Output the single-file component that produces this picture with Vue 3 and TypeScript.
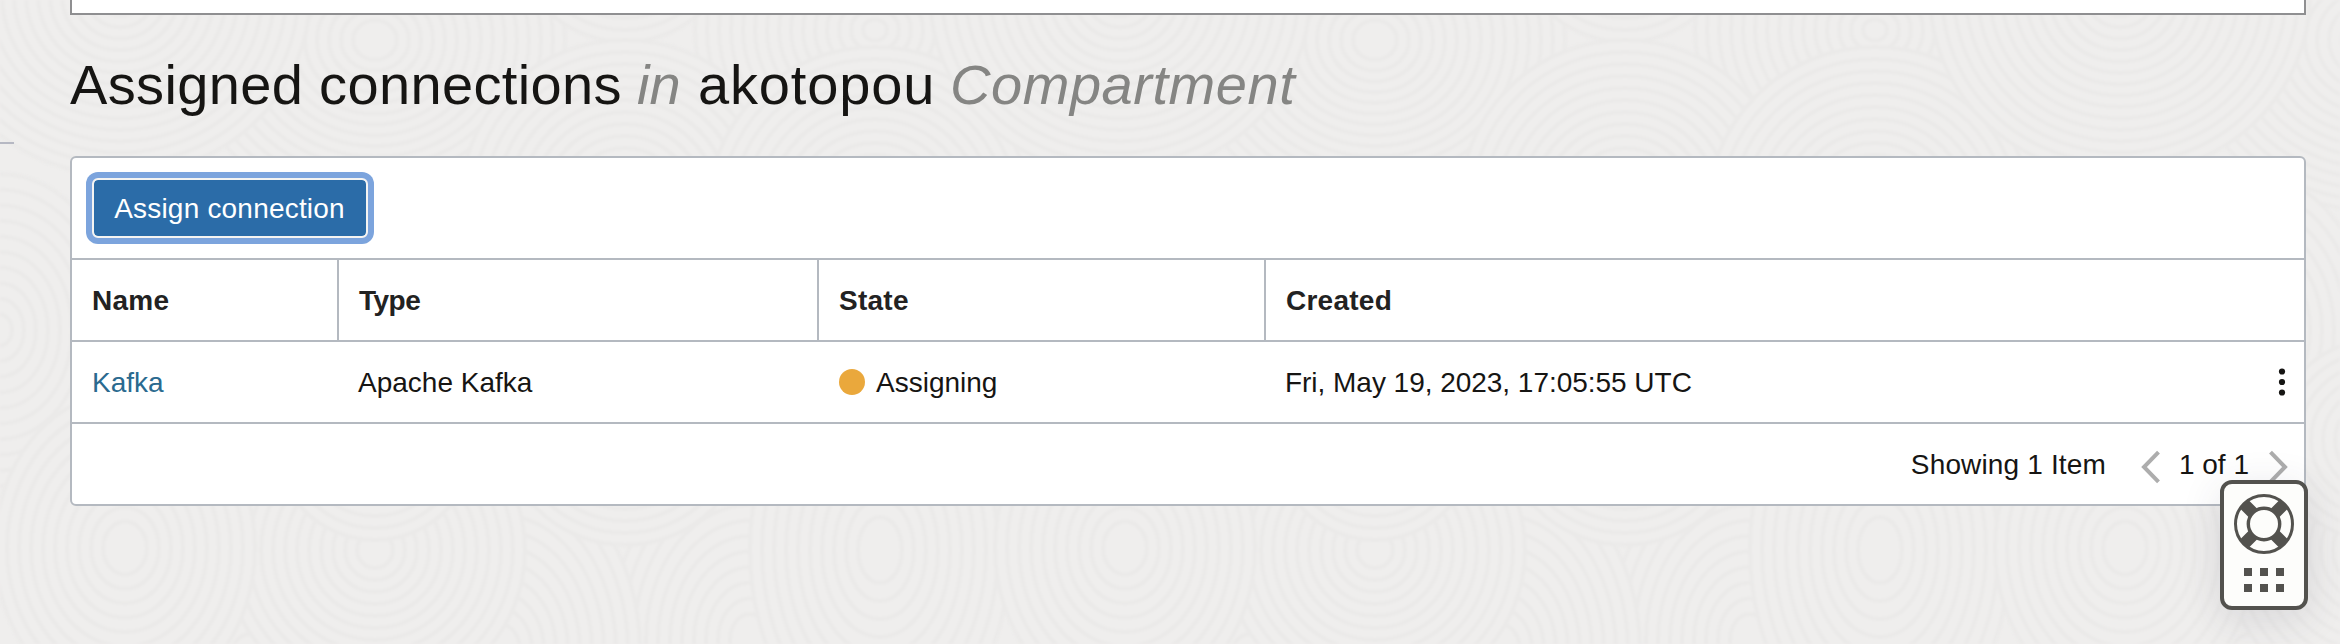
<script setup lang="ts">
interface Ring { cx: number; cy: number; radii: number[]; ratio: number }

// One texture tile: overlapping sets of concentric ripples, repeated every 1000px.
const TILE = 1000
const STEP = 12
const seeds: [number, number, number, number][] = [
  [375, 40, 190, 0.9], [875, 30, 180, 0.9], [625, -70, 112, 1],
  [120, -5, 190, 0.95], [625, 205, 165, 1], [875, 215, 168, 1],
  [0, 330, 120, 1.3], [250, 330, 120, 1.3],
  [750, 640, 140, 1.3], [500, 650, 140, 1.3], [250, 660, 140, 1.3],
  [880, 550, 130, 1.5], [375, 550, 150, 1], [125, 548, 130, 1.2], [625, 420, 125, 1], [375, 440, 100, 1],
]
const ripples: Ring[] = [0, 1, 2].flatMap((tile) =>
  seeds.map(([cx, cy, r, ratio]) => ({
    cx: cx + tile * TILE, cy, ratio,
    radii: Array.from({ length: Math.floor(r / STEP) }, (_, i) => r - i * STEP),
  })),
)

const columns = [
  { id: 'name', label: 'Name' },
  { id: 'type', label: 'Type' },
  { id: 'state', label: 'State' },
  { id: 'created', label: 'Created' },
]
const rows = [
  { name: 'Kafka', type: 'Apache Kafka', state: 'Assigning', created: 'Fri, May 19, 2023, 17:05:55 UTC' },
]
</script>

<template>
  <div class="page">
    <svg class="texture" width="2340" height="644" viewBox="0 0 2340 644" aria-hidden="true">
      <g v-for="(g, i) in ripples" :key="i">
        <ellipse
          v-for="(r, j) in g.radii" :key="j" :cx="g.cx" :cy="g.cy" :rx="r" :ry="r * g.ratio"
          fill="#efeeed" stroke="#ebeae9" stroke-width="4"
        />
      </g>
    </svg>
    <div class="side-rule"></div>
    <main class="content">
      <div class="upper-box"></div>
      <h1 class="title">
        <span class="t-main">Assigned connections</span>
        <em class="t-in">in</em>
        <span class="t-name">akotopou</span>
        <em class="t-kind">Compartment</em>
      </h1>
      <section class="panel">
        <div class="toolbar"><button class="assign" type="button">Assign connection</button></div>
        <div class="grid head">
          <div v-for="c in columns" :key="c.id" class="cell" :class="'h-' + c.id">{{ c.label }}</div>
        </div>
        <div v-for="r in rows" :key="r.name" class="grid row">
          <div class="cell"><a class="link">{{ r.name }}</a></div>
          <div class="cell type">{{ r.type }}</div>
          <div class="cell state"><i class="dot"></i><span>{{ r.state }}</span></div>
          <div class="cell created">
            <span>{{ r.created }}</span>
            <svg class="menu" width="8" height="30" viewBox="0 0 8 30" fill="#161513">
              <circle cx="4" cy="4.5" r="3.1" /><circle cx="4" cy="15" r="3.1" /><circle cx="4" cy="25.5" r="3.1" />
            </svg>
          </div>
        </div>
        <div class="footer">
          <span class="showing">Showing 1 Item</span>
          <svg class="chev prev" width="20" height="34" viewBox="0 0 20 34"><path d="M17.5 2.2 3 17l14.5 14.8" /></svg>
          <span class="pages">1 of 1</span>
          <svg class="chev next" width="20" height="34" viewBox="0 0 20 34"><path d="M2.5 2.2 17 17 2.5 31.8" /></svg>
        </div>
      </section>
    </main>
    <aside class="help">
      <svg width="60" height="60" viewBox="0 0 60 60" fill="none" stroke="#53524e">
        <path stroke-width="12" d="M9.5 9.5 19 19M41 41l9.5 9.5M50.5 9.5 41 19M19 41l-9.5 9.5" />
        <circle cx="30" cy="30" r="28.5" stroke-width="3" />
        <circle cx="30" cy="30" r="15.7" stroke-width="3.4" />
      </svg>
      <div class="squares"><i v-for="n in 6" :key="n"></i></div>
    </aside>
  </div>
</template>

<style>
body { margin: 0; background: #efeeed; }
</style>

<style scoped>
.page {
  position: relative; width: 2340px; height: 644px; overflow: hidden; background: #efeeed;
  font-family: "Liberation Sans", Arial, sans-serif; font-size: 28px; color: #161513;
}
.texture { position: absolute; left: 0; top: 0; filter: blur(1.2px); }
.side-rule { position: absolute; left: 0; top: 142px; width: 14px; height: 2px; background: #b6b8c3; }
.content { position: relative; width: 2236px; margin-left: 70px; }
.upper-box { box-sizing: border-box; height: 15px; background: #fff; border: 2px solid #8f8f91; border-top: 0; }
.title { display: flex; margin: 0; height: 141px; font-size: 56px; font-weight: 400; line-height: 139px; white-space: nowrap; }
.title em { color: #858583; }
.t-main { width: 567px; letter-spacing: 0.35px; }
.t-in { width: 61px; }
.t-name { width: 252px; letter-spacing: 0.85px; }
.t-kind { letter-spacing: 0.55px; }
.panel { box-sizing: border-box; height: 350px; background: #fff; border: 2px solid #b4b9c0; border-radius: 6px; }
.toolbar { box-sizing: border-box; height: 100px; padding: 20px; }
.assign {
  display: block; box-sizing: border-box; width: 276px; height: 60px; padding: 1px 1px 0 0; border: 2px solid #f5f4f2;
  border-radius: 6px; background: #2b6ca8; background-clip: padding-box; box-shadow: 0 0 0 6px #7ca4dd;
  color: #fff; font: 28px/55px "Liberation Sans", Arial, sans-serif; letter-spacing: 0.2px;
}
.grid {
  display: grid; grid-template-columns: 265px 480px 447px 1fr; grid-template-rows: 80px;
  border-top: 2px solid #b4b9c0; line-height: 79px; white-space: nowrap;
}
.cell { box-sizing: border-box; padding: 1px 0 0 20px; }
.head { font-weight: 700; color: #222; }
.head .cell { letter-spacing: 0.25px; }
.head .cell + .cell { padding-left: 20px; border-left: 2px solid #b4b9c0; }
.head .h-type { letter-spacing: -0.5px; }
.row .type { padding-left: 21px; }
.link { color: #2a6a8f; }
.row .state { display: flex; align-items: center; padding: 0 0 0 22px; }
.row .state span, .row .created span, .showing, .pages { padding-top: 1px; }
.dot { width: 26px; height: 26px; margin-right: 11px; border-radius: 50%; background: #eaa83c; }
.row .created { display: flex; align-items: center; justify-content: space-between; padding: 0 18px 0 21px; letter-spacing: -0.03px; }
.footer { display: flex; justify-content: flex-end; align-items: center; height: 80px; padding-right: 16px; border-top: 2px solid #b4b9c0; line-height: 80px; white-space: nowrap; }
.showing { margin-right: 35px; letter-spacing: 0.15px; }
.chev { margin-top: 6px; fill: none; stroke: #adadad; stroke-width: 4; }
.pages { margin: 0 19px 0 18px; }
.help {
  position: absolute; left: 2220px; top: 480px; box-sizing: border-box; width: 88px; height: 130px; padding-top: 10px;
  display: flex; flex-direction: column; align-items: center; gap: 14px;
  background: #fdfdfb; border: 4px solid #53524e; border-radius: 12px; box-shadow: 0 8px 40px rgba(50, 50, 70, 0.12);
}
.help svg { display: block; flex: none; }
.squares { display: grid; grid-template-columns: repeat(3, 8px); grid-auto-rows: 8px; gap: 8px; }
.squares i { background: #53524e; }
</style>
